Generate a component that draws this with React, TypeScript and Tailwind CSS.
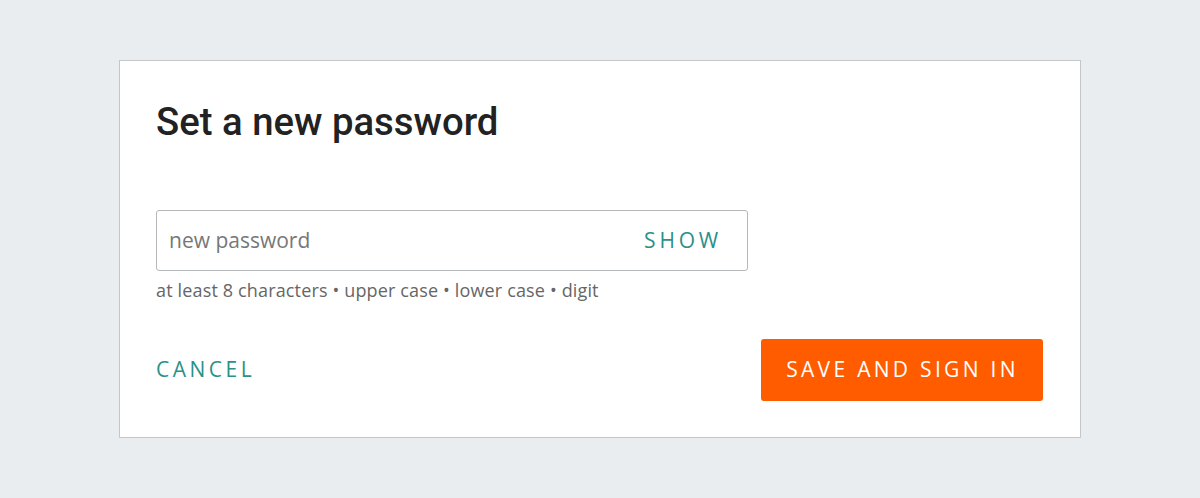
import React from "react";

export default function App() {
  return (
    <div className="min-h-[498px] w-full bg-[#e9edf0] pt-[60px]" style={{ fontFamily: '"Open Sans", sans-serif' }}>
      <div className="mx-auto w-[962px] h-[378px] bg-white border border-[#c4c7ca] px-[36px] pt-[37px]">
        <h1 className="text-[38.3px] leading-[48px] font-medium text-[#222]" style={{ fontFamily: 'Roboto, sans-serif' }}>
          Set a new password
        </h1>
        <div className="mt-[64px] w-[592px] h-[61px] border border-[#b5b8ba] rounded-[3px] flex items-center justify-between pl-[12px] pr-[25px]">
          <span className="text-[21px] text-[#777]">new password</span>
          <span className="text-[21px] tracking-[3.8px] text-[#2b9189]">SHOW</span>
        </div>
        <p className="mt-[6px] text-[18px] leading-[26px] tracking-[0.15px] text-[#666]">
          at least 8 characters • upper case • lower case • digit
        </p>
        <div className="mt-[36px] flex items-center justify-between pr-[1px]">
          <span className="text-[21px] tracking-[3.5px] text-[#2b9189]">CANCEL</span>
          <button className="w-[282px] h-[62px] bg-[#ff5c00] rounded-[3px] text-white text-[21px] tracking-[3.3px] pl-[1px]">
            SAVE AND SIGN IN
          </button>
        </div>
      </div>
    </div>
  );
}
